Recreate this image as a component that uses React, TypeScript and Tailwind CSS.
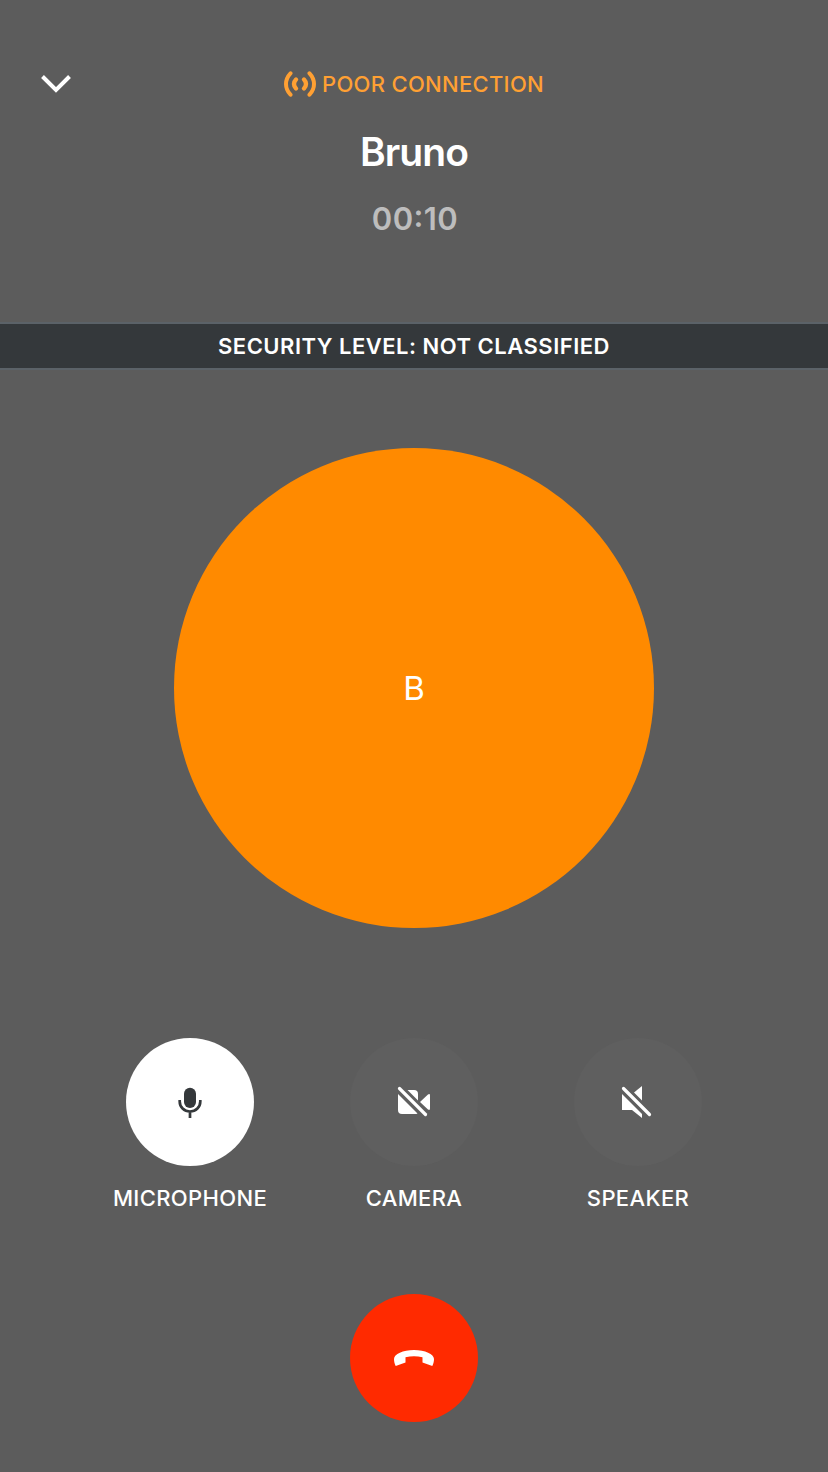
import type { ReactNode } from "react";

function ChevronDown() {
  return (
    <svg width="32" height="20" viewBox="0 0 32 20" fill="none">
      <path d="M2.500 2.500L16 16L29.500 2.500" stroke="white" strokeWidth="4" />
    </svg>
  );
}

function SignalIcon() {
  return (
    <svg width="32" height="26" viewBox="0 0 32 26" fill="none" stroke="#ffa033" strokeWidth="4" strokeLinecap="round">
      <path d="M6.500 2.300Q2 7 2 13T6.500 23.700M25.500 2.300Q30 7 30 13T25.500 23.700" />
      <path d="M12 8.500Q10 10.500 10 13T12 17.500M20 8.500Q22 10.500 22 13T20 17.500" strokeWidth="4.400" />
    </svg>
  );
}

function MicIcon() {
  return (
    <svg width="32" height="32" viewBox="0 0 32 32" fill="none">
      <rect x="10" y="1.700" width="12" height="20.300" rx="6" fill="#34383b" />
      <path d="M5.700 14V15.500C5.700 21 10 25.500 16 25.500S26.300 21 26.300 15.500V14M16 26V32" stroke="#34383b" strokeWidth="2.700" />
    </svg>
  );
}

function CameraOffIcon() {
  return (
    <svg width="34" height="32" viewBox="0 0 34 32" fill="white">
      <path d="M1 8L20.500 27.500Q19.500 28 18 28H5Q1 28 1 24Z" />
      <path d="M10.500 4H17Q21 4 21 8V14.500Z" />
      <path d="M23 16L31 8.500Q33 7.300 33 9.500V22.500Q33 24.700 31 23.500Z" />
      <path d="M2.500 2.500L28.500 28.500" stroke="white" strokeWidth="3.200" strokeLinecap="round" />
    </svg>
  );
}

function SpeakerOffIcon() {
  return (
    <svg width="34" height="32" viewBox="0 0 34 32" fill="white">
      <path d="M1 8L21 28V32L11 24H1Z" />
      <path d="M21 0V14.500L13 6.500Z" />
      <path d="M2.500 2.500L28.500 28.500" stroke="white" strokeWidth="3.200" strokeLinecap="round" />
    </svg>
  );
}

function HangUpIcon() {
  return (
    <svg width="40" height="16" viewBox="0 0 40 16" fill="white">
      <path d="M1.700 15.900C.5 13.700 0 11.500 0 9C0 4 9 0 20 0S40 4 40 9C40 11.500 39.500 13.700 38.300 15.900L28.500 12.500V7.200Q20 5.300 11.500 7.200V12.500Z" />
    </svg>
  );
}

function CallControl({ label, active = false, children }: { label: string; active?: boolean; children: ReactNode }) {
  return (
    <div className="flex w-56 flex-col items-center">
      <button
        aria-label={label}
        className={`flex size-32 items-center justify-center rounded-full ${active ? "bg-white" : "bg-[#5f5f5f]"}`}
      >
        {children}
      </button>
      <span className="mt-4 text-[22px] leading-8 font-[550] tracking-[0.35px]">{label}</span>
    </div>
  );
}

export default function App() {
  return (
    <main className="flex h-[1472px] w-[828px] flex-col items-center overflow-hidden bg-[#5c5c5c] font-['Inter',sans-serif] text-white">
      <header className="grid w-full grid-cols-[80px_1fr_80px] items-center px-4 pt-[68px]">
        <button aria-label="Minimize call" className="flex justify-center">
          <ChevronDown />
        </button>
        <div className="flex h-8 items-center justify-center gap-1.5 text-[#ffa033]">
          <SignalIcon />
          <span className="text-[22px] leading-8 font-medium tracking-[0.3px]">POOR CONNECTION</span>
        </div>
      </header>
      <h1 className="mt-7 text-[39px] leading-[48px] font-semibold tracking-[-0.9px]">Bruno</h1>
      <p className="mt-[23px] flex pl-0.5 text-[31px] leading-10 font-semibold tracking-[0.4px] text-[#bdbdbd]">
        <span>00</span>
        <span className="-translate-y-[3px]">:</span>
        <span>10</span>
      </p>
      <div className="mt-[83px] flex h-12 w-full items-center justify-center border-y-2 border-[#5b6268] bg-[#34383b] text-[22px] font-semibold tracking-[0.5px]">
        SECURITY LEVEL: NOT CLASSIFIED
      </div>
      <div className="mt-[78px] flex size-[480px] shrink-0 items-center justify-center rounded-full bg-[#ff8a00] pt-0.5 text-[33px]">
        B
      </div>
      <div className="mt-[110px] flex">
        <CallControl label="MICROPHONE" active>
          <MicIcon />
        </CallControl>
        <CallControl label="CAMERA">
          <CameraOffIcon />
        </CallControl>
        <CallControl label="SPEAKER">
          <SpeakerOffIcon />
        </CallControl>
      </div>
      <button aria-label="End call" className="mt-20 flex size-32 items-center justify-center rounded-full bg-[#ff2a00]">
        <HangUpIcon />
      </button>
    </main>
  );
}
